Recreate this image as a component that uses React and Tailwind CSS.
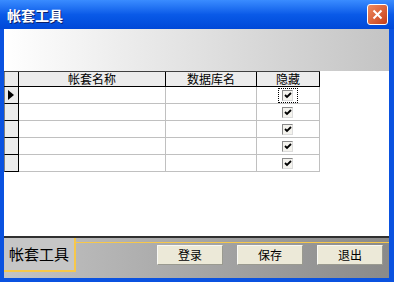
import React from "react";

const rows = [0, 1, 2, 3, 4];

function Check({ focused }) {
  return (
    <div
      className={
        "flex items-center justify-center w-[20px] h-[15px] " +
        (focused ? "outline outline-1 outline-dotted outline-black -outline-offset-1" : "")
      }
    >
      <div className="w-[11px] h-[11px] border border-[#8a8a8a] border-r-[#dcdcdc] border-b-[#dcdcdc] bg-[#f4f3ee] flex items-center justify-center">
        <svg width="8" height="7" viewBox="0 0 8 7">
          <path d="M1 3 L3 5 L7 1" stroke="#000" strokeWidth="1.8" fill="none" />
        </svg>
      </div>
    </div>
  );
}

export default function App() {
  return (
    <div
      className="w-[394px] h-[282px] flex flex-col bg-[#0a52e0] overflow-hidden"
      style={{ fontFamily: '"Noto Sans CJK SC", "Noto Sans", sans-serif' }}
    >
      {/* title bar */}
      <div className="h-[29px] shrink-0 flex items-center justify-between pl-[7px] pr-[6px] bg-gradient-to-b from-[#3a8cff] via-[#0a5ae8] to-[#0048d8]">
        <span className="text-white font-bold text-[14px] leading-none [text-shadow:1px_1px_0_#0a1e6a]">
          帐套工具
        </span>
        <div className="w-[21px] h-[21px] rounded-[3px] border border-white bg-gradient-to-br from-[#ef8a5e] to-[#c53c16] flex items-center justify-center">
          <svg width="11" height="11" viewBox="0 0 11 11">
            <path d="M1.5 1.5 L9.5 9.5 M9.5 1.5 L1.5 9.5" stroke="#fff" strokeWidth="2" />
          </svg>
        </div>
      </div>

      {/* client area */}
      <div className="flex-1 ml-[4px] mr-[5px] mb-[4px] flex flex-col bg-white">
        <div className="h-[42px] shrink-0 bg-gradient-to-r from-white to-[#c4c4c4]" />

        <div className="flex-1 bg-white text-[12px] text-black leading-none">
          {/* header */}
          <div className="flex w-fit h-[16px] border-t border-b border-t-[#404040] border-b-black bg-[#ececec]">
            <div className="w-[15px] border-l border-r border-l-[#808080] border-r-black" />
            <div className="w-[147px] border-r border-black flex items-center justify-center">帐套名称</div>
            <div className="w-[91px] border-r border-black flex items-center justify-center">数据库名</div>
            <div className="w-[63px] border-r border-black flex items-center justify-center">隐藏</div>
          </div>
          {rows.map((r) => (
            <div key={r} className="flex w-fit h-[17px]">
              <div className="w-[15px] border-l border-r border-b border-l-[#808080] border-r-black border-b-black bg-[#ececec] flex items-center pl-[3px]">
                {r === 0 && (
                  <svg width="6" height="10" viewBox="0 0 6 10">
                    <path d="M0 0 L6 5 L0 10 Z" fill="#000" />
                  </svg>
                )}
              </div>
              <div className="w-[147px] border-r border-b border-[#c0c0c0]" />
              <div className="w-[91px] border-r border-b border-[#c0c0c0]" />
              <div className="w-[63px] border-r border-b border-[#c0c0c0] flex items-center justify-center pr-[1px]">
                <Check focused={r === 0} />
              </div>
            </div>
          ))}
        </div>

        {/* bottom panel */}
        <div className="h-[42px] shrink-0 border-t-2 border-[#303030] flex bg-gradient-to-r from-[#c4c4c4] to-[#8a8a8a]">
          <div className="w-[72px] h-[34px] bg-[#c6c6c6] border-r-2 border-b-2 border-[#f7c84a] flex items-center pl-[5px] text-[15px] text-black">
            帐套工具
          </div>
          <div className="flex-1 flex flex-col">
            <div className="h-[5px] border-b border-[#f7c84a]" />
            <div className="flex justify-end gap-[14px] pr-[6px] pt-[2px]">
              {["登录", "保存", "退出"].map((t) => (
                <button
                  key={t}
                  className="w-[66px] h-[20px] bg-[#ece9d8] border border-[#f8f8f4] border-r-[#9a9a90] border-b-[#9a9a90] text-[12px] text-black flex items-center justify-center"
                >
                  {t}
                </button>
              ))}
            </div>
          </div>
        </div>
      </div>
    </div>
  );
}
